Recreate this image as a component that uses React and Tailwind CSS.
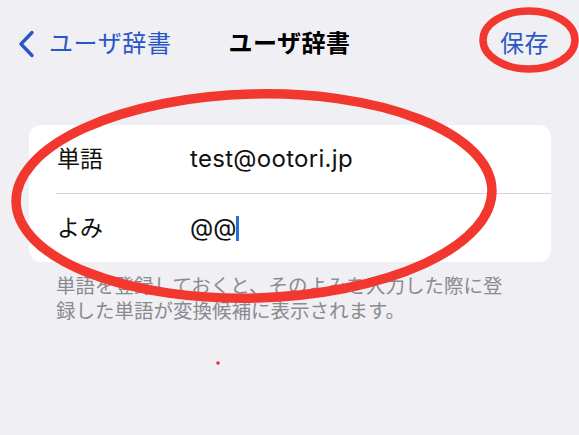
import React from "react";

const FONT = { fontFamily: '"Inter", "Noto Sans CJK JP", sans-serif' };

export default function App() {
  return (
    <div
      className="relative w-[579px] h-[435px] overflow-hidden bg-[#efeff4]"
      style={FONT}
    >
      {/* Nav bar */}
      <div className="grid grid-cols-[1fr_auto_1fr] items-center h-[88px]">
        <div className="flex items-center pl-[18px] text-[#2a56c6]">
          <svg width="17" height="28" viewBox="0 0 17 28" className="mr-[14px]">
            <path
              d="M14 2.5 L3 14 L14 25.5"
              fill="none"
              stroke="#2a56c6"
              strokeWidth="3.4"
              strokeLinecap="round"
              strokeLinejoin="round"
            />
          </svg>
          <span className="text-[24px] leading-none tracking-[0.6px]">ユーザ辞書</span>
        </div>
        <div className="text-[24px] leading-none font-bold text-black tracking-[0.5px]">
          ユーザ辞書
        </div>
        <div className="flex justify-end pr-[30px]">
          <span className="text-[24px] leading-none text-[#2a56c6] tracking-[0.5px]">保存</span>
        </div>
      </div>

      {/* Card */}
      <div className="mt-[37px] ml-[29px] mr-[28px] bg-white rounded-[12px] overflow-hidden">
        <div className="flex items-center h-[68px] pl-[28px]">
          <span className="w-[133px] text-[23px] text-[#111] leading-none">単語</span>
          <span className="text-[24px] text-[#111] leading-none tracking-[0.3px]">test@ootori.jp</span>
        </div>
        <div className="ml-[27px] h-px bg-[#d4d4d8]" />
        <div className="flex items-center h-[68px] pl-[28px]">
          <span className="w-[133px] text-[23px] text-[#111] leading-none">よみ</span>
          <span className="text-[24px] text-[#111] leading-none">@@</span>
          <span className="w-[2.5px] h-[25px] bg-[#2a6fd6]" />
        </div>
      </div>

      {/* Footer note */}
      <p className="mt-[12px] pl-[56px] text-[19.5px] leading-[25px] text-[#8a8a8f]">
        単語を登録しておくと、そのよみを入力した際に登
        <br />
        録した単語が変換候補に表示されます。
      </p>

      {/* Annotations */}
      <svg
        className="absolute inset-0 pointer-events-none"
        width="579"
        height="435"
        viewBox="0 0 579 435"
      >
        <ellipse
          cx="254"
          cy="196"
          rx="238"
          ry="102"
          fill="none"
          stroke="#f2372f"
          strokeWidth="9.5"
          transform="rotate(-1.5 254 196)"
        />
        <ellipse
          cx="529"
          cy="40"
          rx="46"
          ry="29"
          fill="none"
          stroke="#f2372f"
          strokeWidth="7.5"
        />
        <circle cx="218" cy="363" r="1.8" fill="#e8302a" />
      </svg>
    </div>
  );
}
